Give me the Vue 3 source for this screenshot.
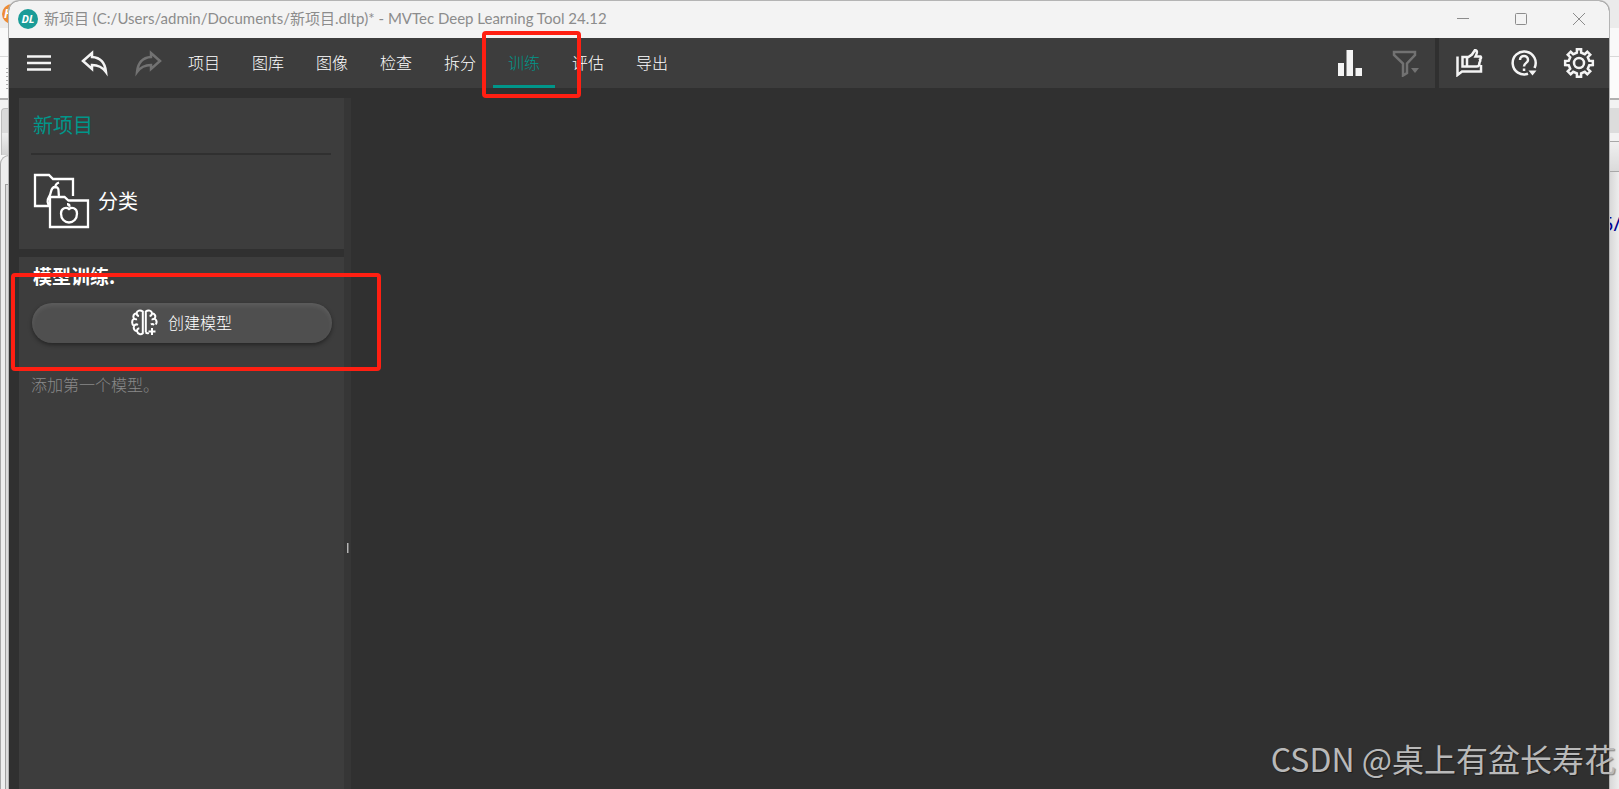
<template>
  <div class="desktop">
    <div class="behind behind-left" aria-hidden="true">
      <span class="orange-logo">H</span>
      <div class="strip strip-top"></div>
      <div class="strip strip-address"></div>
      <div class="strip strip-ruler"><i></i></div>
      <div class="strip strip-gap"></div>
      <div class="strip strip-tab"></div>
      <div class="strip strip-panel"><i></i></div>
    </div>

    <main class="window">
      <header class="title-bar">
        <span class="app-logo">DL</span>
        <h1 class="window-title">新项目 (C:/Users/admin/Documents/新项目.dltp)* - MVTec Deep Learning Tool 24.12</h1>
        <button type="button" class="window-btn" aria-label="最小化">
          <svg viewBox="0 0 14 14"><path d="M1 6.5h12" /></svg>
        </button>
        <button type="button" class="window-btn" aria-label="最大化">
          <svg viewBox="0 0 14 14"><rect x="1.5" y="1.5" width="11" height="11" rx="1" /></svg>
        </button>
        <button type="button" class="window-btn" aria-label="关闭">
          <svg viewBox="0 0 14 14"><path d="M1 1l12 12M13 1L1 13" /></svg>
        </button>
      </header>

      <div class="toolbar">
        <div class="tools tools-left">
          <button type="button" class="tool-btn" aria-label="菜单">
            <svg viewBox="0 0 28 28" class="icon"><path d="M2 7.500h24M2 14h24M2 20.500h24" /></svg>
          </button>
          <button type="button" class="tool-btn" aria-label="撤销">
            <svg viewBox="0 0 28 28" class="icon"><path :d="arrowPath" /></svg>
          </button>
          <button type="button" class="tool-btn" aria-label="重做" disabled>
            <svg viewBox="0 0 28 28" class="icon"><path :d="arrowPath" transform="matrix(-1 0 0 1 28 0)" /></svg>
          </button>
        </div>

        <nav class="tabs">
          <button
            v-for="tab in tabs"
            :key="tab"
            type="button"
            class="tab"
            :class="{ active: tab === activeTab }"
            @click="activeTab = tab"
          >
            {{ tab }}
          </button>
        </nav>

        <div class="tools tools-filter">
          <button type="button" class="tool-btn" aria-label="统计">
            <svg viewBox="0 0 28 28" class="icon solid">
              <path d="M1 14h6v13H1zM9.500 1h6.500v26H9.500zM18.500 19h6.500v8h-6.500z" />
            </svg>
          </button>
          <button type="button" class="tool-btn" aria-label="筛选" disabled>
            <svg viewBox="0 0 28 28" class="icon">
              <path d="M2 3h21v3l-8 8.500v9.500l-4 2.500V14.500L2 6z" />
              <path d="M19 19h8l-4 5z" class="fill" />
            </svg>
          </button>
        </div>

        <div class="tools tools-right">
          <button type="button" class="tool-btn" aria-label="反馈">
            <svg viewBox="0 0 28 28" class="icon">
              <path d="M2.500 7.500v18.500l4.500-3.500h19V16" />
              <path d="M7.500 8h4.500v9.500H7.500zM12 9l5-3.500 3-4.500c2.500.5 2.500 2.500.5 6.500h5c1 1 .5 2-.5 3 .5 1 .3 2-.5 3 0 2.500-1 4-3 4H12" />
            </svg>
          </button>
          <button type="button" class="tool-btn" aria-label="帮助">
            <svg viewBox="0 0 28 28" class="icon">
              <path d="M24.500 19A11.500 11.500 0 1 0 18 24.800" />
              <path d="M10 11c0-5.500 8-5.500 8 0 0 3-4 2.800-4 6.500" />
              <path d="M12.800 19.500h2.500v2.500h-2.500zM18.500 21.500h8l-4 5z" class="fill" />
            </svg>
          </button>
          <button type="button" class="tool-btn" aria-label="设置">
            <svg viewBox="0 0 32 32" class="icon gear">
              <path :d="gearPath" />
              <circle cx="16" cy="16" r="5" />
            </svg>
          </button>
        </div>
      </div>

      <div class="workspace">
        <aside class="sidebar">
          <section class="card project-card">
            <h2 class="project-name">新项目</h2>
            <div class="project-type">
              <svg viewBox="0 0 58 58" class="type-icon">
                <path d="M16 34H2V3h14l4 4h20v17" />
                <path d="M17 25h14.500l4 3.500H55V55H17z" />
                <path d="M26 10.500c-3 1-4 3-4 6M17 34c-3-2-3-6-1-9 3-4 1-10 6-10s3 5 4 9" />
                <path d="M36 37c-2.500-2-8-1.500-8 4.500 0 5.500 3.500 9 8 9s8-3.500 8-9c0-6-5.500-6.500-8-4.500z" />
                <path d="M34 31c3-.5 4 2 3.500 4-2.500 0-4-1.500-3.500-4z" class="fill" />
              </svg>
              <span>分类</span>
            </div>
          </section>

          <section class="card training-card">
            <h3 class="training-title">模型训练:</h3>
            <button type="button" class="create-btn">
              <svg viewBox="0 0 28 28" class="brain-icon">
                <path d="M12.800 3.500c-2.500-2-6-1-6.200 1.800C3.500 5.500 2.500 8.500 4 10.500c-2.500 2-2.500 5.500 0 7.500-1 2.500.5 5 3 5.300.8 3 4 3.700 5.800 2z" />
                <path d="M15.800 24.500V3.500c2.500-2 6-1 6.200 1.800 3.100.2 4.100 3.200 2.600 5.200 2 1.500 2.400 4 1.200 6M15.800 24.500c.8.800 2 .8 3 .3" />
                <path d="M6.600 5.500c.2 1.500 1 2.300 2.400 2.500M4 10.500c1 .9 2 1 3 .7M4 18c1-1.500 2.500-2 4-1.200M7 23c0-1.500.8-2.500 2.300-2.700M22 5.500c-.2 1.500-1 2.300-2.400 2.500M24.600 10.500c-1 .9-2 1-3 .7M24 17c-1-1.200-2-1.300-3.200-.6" />
                <path d="M22 20v7M18.500 23.500h7" />
              </svg>
              <span>创建模型</span>
            </button>
            <p class="hint">添加第一个模型。</p>
          </section>
        </aside>
        <div class="splitter"><i></i></div>
        <div class="canvas"></div>
      </div>
    </main>

    <div class="behind behind-right" aria-hidden="true">
      <div class="strip strip-top"></div>
      <div class="strip strip-address"></div>
      <div class="strip strip-ruler"></div>
      <div class="strip strip-gap"></div>
      <div class="strip strip-band"></div>
      <div class="strip strip-gap"></div>
      <div class="strip strip-head"></div>
      <div class="strip strip-page"><span>5/</span></div>
    </div>

    <div class="mark mark-tab"></div>
    <div class="mark mark-create"></div>
    <div class="watermark">CSDN @桌上有盆长寿花</div>
  </div>
</template>

<script setup>
import { ref } from 'vue';

const tabs = ['项目', '图库', '图像', '检查', '拆分', '训练', '评估', '导出'];
const activeTab = ref('训练');

const arrowPath = 'M3 12L12 4V8C20 8.500 25 13 26 23C22 17.500 18 16 12 16V20Z';

// Contorno del engranaje: cada diente tiene dos puntos fuera y dos dentro
const buildGear = (teeth, outer, inner) => {
  const step = (Math.PI * 2) / teeth;
  const points = [];
  for (let i = 0; i < teeth; i++) {
    const corners = [[-0.26, inner], [-0.19, outer], [0.19, outer], [0.26, inner]];
    corners.forEach(([offset, radius]) => {
      const angle = (i + offset) * step - Math.PI / 2;
      points.push(`${(16 + radius * Math.cos(angle)).toFixed(2)} ${(16 + radius * Math.sin(angle)).toFixed(2)}`);
    });
  }
  return `M${points.join('L')}Z`;
};

const gearPath = buildGear(8, 14, 10.5);
</script>

<style>
body {
  margin: 0;
  background: #f0f0f0;
}
</style>

<style scoped>
.desktop {
  position: relative;
  display: flex;
  min-height: 100vh;
  overflow: hidden;
  background: linear-gradient(#ebebeb 28px, #f5f5f5 28px);
  font-family: "Noto Sans CJK SC", sans-serif;
}

button {
  border: none;
  padding: 0;
  background: none;
  font-family: inherit;
  color: inherit;
  cursor: pointer;
}

h1,
h2,
h3,
p {
  margin: 0;
}

svg {
  fill: none;
  stroke: currentColor;
}

/* Window */
.window {
  position: relative;
  flex: 1;
  min-width: 0;
  display: flex;
  flex-direction: column;
  margin-top: 1px;
  border-radius: 10px 10px 0 0;
  overflow: hidden;
  background: #303030;
  color: #ffffff;
  box-shadow: 0 0 0 1px #b4b4b4;
}

.title-bar {
  display: flex;
  height: 37px;
  padding: 0 1px 0 9px;
  background: #f3f3f3;
  color: #8c8c8c;
}

.app-logo {
  width: 20px;
  height: 20px;
  margin-top: 8px;
  border-radius: 50%;
  background: #1a9c98;
  color: #ffffff;
  font: italic 700 11px/20px "Open Sans", sans-serif;
  text-align: center;
}

.window-title {
  flex: 1;
  margin-left: 6px;
  font: 400 15px/35px Lato, "Noto Sans CJK SC", sans-serif;
  white-space: nowrap;
}

.window-btn {
  display: flex;
  align-items: center;
  justify-content: center;
  width: 58px;
  height: 35px;
}

.window-btn svg {
  width: 14px;
  height: 14px;
}

/* Toolbar */
.toolbar {
  display: flex;
  height: 50px;
  background: #3d3d3d;
}

.tools {
  display: flex;
}

.tools-left {
  padding: 0 2px;
}

.tools-filter {
  margin-left: auto;
  padding-right: 2px;
}

.tools-right {
  padding: 0 3px 0 2px;
  border-left: 4px solid #303030;
}

.tool-btn {
  display: flex;
  align-items: center;
  justify-content: center;
  width: 55px;
  height: 50px;
  color: #f4f4f4;
}

.tool-btn:disabled {
  color: #727272;
}

.icon {
  width: 28px;
  height: 28px;
  stroke-width: 2.5;
}

.icon.gear {
  width: 32px;
  height: 32px;
}

.solid,
.fill {
  fill: currentColor;
  stroke: none;
}

.tabs {
  display: flex;
  gap: 2px;
  margin-left: -5px;
}

.tab {
  width: 62px;
  padding-top: 1px;
  border-bottom: 3px solid transparent;
  font-size: 16px;
  font-weight: 300;
  line-height: 24px;
}

.tab.active {
  border-color: #00968a;
  color: #00968a;
}

/* Workspace */
.workspace {
  flex: 1;
  display: flex;
  padding: 10px 0 0 10px;
}

.sidebar {
  display: flex;
  flex-direction: column;
  gap: 8px;
  width: 325px;
}

.card {
  padding: 12px 13px 19px 12px;
  background: #3d3d3d;
}

.project-name {
  padding: 0 2px 13px;
  border-bottom: 2px solid #303030;
  color: #00968a;
  font-size: 20px;
  font-weight: 400;
  line-height: 30px;
}

.project-type {
  display: flex;
  align-items: center;
  gap: 7px;
  padding: 17px 2px 0;
  font-size: 20px;
  line-height: 30px;
}

.type-icon {
  width: 58px;
  height: 58px;
  stroke-width: 2.3;
}

.training-card {
  flex: 1;
  padding-top: 4px;
}

.training-title {
  padding: 0 2px;
  font-size: 19px;
  font-weight: 700;
  line-height: 30px;
}

.create-btn {
  display: flex;
  align-items: center;
  justify-content: center;
  gap: 10px;
  width: 100%;
  height: 40px;
  margin: 12px 1px 0;
  padding: 0 2px 2px 0;
  border-radius: 20px;
  background: #4f4f4f;
  box-shadow: 0 2px 4px rgba(0, 0, 0, 0.4), inset 0 3px 4px rgba(255, 255, 255, 0.08);
  font-size: 16px;
  font-weight: 300;
}

.brain-icon {
  width: 28px;
  height: 28px;
  stroke-width: 2;
}

.hint {
  margin-top: 29px;
  color: #8a8a8a;
  font-size: 16px;
  font-weight: 300;
  line-height: 24px;
}

.splitter {
  width: 7px;
  padding-top: 445px;
  background: #363636;
}

.splitter i {
  display: block;
  width: 2px;
  height: 10px;
  margin-left: 3px;
  background: linear-gradient(90deg, #b4b4b4 50%, #727272 50%);
}

.canvas {
  flex: 1;
}

/* Programs behind the window */
.behind {
  display: flex;
  flex-direction: column;
  width: 9px;
}

.behind-right {
  width: 10px;
}

.strip {
  box-sizing: border-box;
  flex-shrink: 0;
}

.strip-top {
  height: 28px;
  background: #ebebeb;
}

.strip-address {
  height: 29px;
  border-bottom: 1px solid #d8d8d8;
  background: #f9f9f9;
}

.strip-ruler {
  height: 43px;
  padding: 11px 1px 0 6px;
  border-bottom: 2px solid #b0b0b0;
  background: #fbfbfb;
}

.strip-ruler i {
  display: block;
  height: 21px;
  background: repeating-linear-gradient(#b0b0b0 0 1px, transparent 1px 4px);
}

.strip-gap {
  height: 8px;
  background: #f2f2f2;
}

.strip-tab {
  height: 47px;
  margin-left: 1px;
  border: 1px solid #bdbdbd;
  border-width: 1px 0 0 1px;
  border-radius: 4px 0 0 0;
  background: linear-gradient(#dadada 24px, #eeeeee 24px, #d2d2d2);
}

.strip-panel {
  flex: 1;
  display: flex;
  padding: 28px 1px 0 4px;
  border-left: 1px solid #a8a8a8;
  border-top: 1px solid #a8a8a8;
  border-radius: 9px 0 0 0;
  background: #eeeeee;
}

.strip-panel i {
  flex: 1;
  border-left: 1px solid #a0a0a0;
  border-top: 1px solid #a0a0a0;
  background: #dcdcdc;
}

.strip-band {
  height: 25px;
  background: #dcdcdc;
}

.strip-head {
  height: 31px;
  border-top: 1px solid #a8a8a8;
  border-bottom: 1px solid #a8a8a8;
  background: linear-gradient(#f0f0f0, #dadada);
}

.strip-page {
  flex: 1;
  padding-top: 38px;
  background: linear-gradient(90deg, #d6d6d6, #ededed);
}

.strip-page span {
  display: block;
  margin-left: -7px;
  color: #000090;
  font: 20px/28px "Noto Sans", sans-serif;
}

.orange-logo {
  position: absolute;
  top: 4px;
  left: 2px;
  width: 20px;
  height: 20px;
  border-radius: 50%;
  background: #ee8c34;
  color: #ffffff;
  font: italic 700 12px/20px "Open Sans", sans-serif;
  text-indent: 2px;
}

/* Red frames over the page */
.mark {
  position: absolute;
  box-sizing: border-box;
  border: 4px solid #ff1f12;
  border-radius: 4px;
  pointer-events: none;
}

.mark-tab {
  top: 31px;
  left: 482px;
  width: 99px;
  height: 67px;
}

.mark-create {
  top: 273px;
  left: 11px;
  width: 370px;
  height: 98px;
}

.watermark {
  position: absolute;
  right: 3px;
  bottom: 7px;
  color: #b9b9b9;
  font-size: 32px;
  font-weight: 400;
  line-height: 48px;
  text-shadow: 1px 1px 1px rgba(0, 0, 0, 0.4);
  white-space: nowrap;
}
</style>
